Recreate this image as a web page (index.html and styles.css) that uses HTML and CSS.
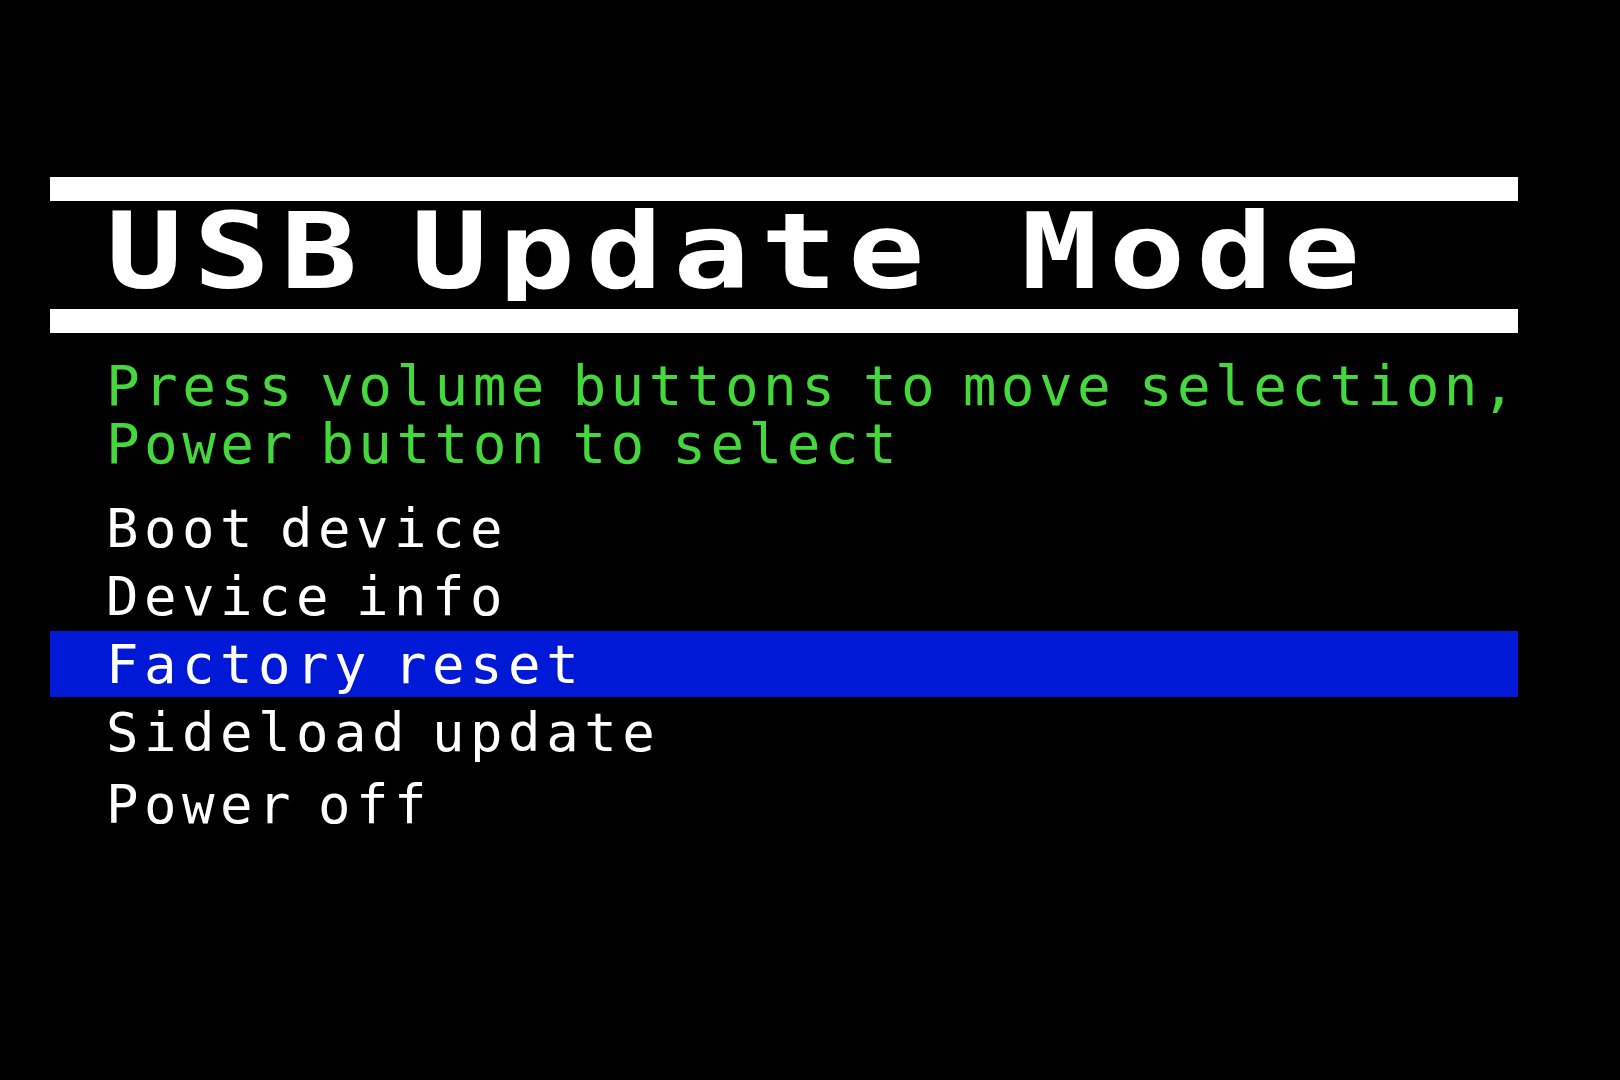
FILE: index.html
```html
<!DOCTYPE html>
<html>

<head>
    <title>USB Update Mode</title>
    <link rel="stylesheet" href="styles.css">
</head>

<body>

    <div class="screen">
        <!-- Header between the two white rules -->
        <div class="rule"></div>
        <div class="title"><span class="title-text">USB Update  Mode</span></div>
        <div class="rule"></div>

        <!-- Instructions -->
        <div class="hint">
            <p>Press volume buttons to move selection,</p>
            <p>Power button to select</p>
        </div>

        <!-- Boot menu -->
        <ul class="menu">
            <li class="item">Boot device</li>
            <li class="item">Device info</li>
            <li class="item selected">Factory reset</li>
            <li class="item">Sideload update</li>
            <li class="item last">Power off</li>
        </ul>
    </div>

</body>

</html>
```

FILE: styles.css
```css
/* Bootloader screen */
body {
    margin: 0;
    background-color: #000;
    color: #fff;
    font-family: "DejaVu Sans Mono", "Liberation Mono", monospace;
}

.screen {
    width: 1468px;
    margin-left: 50px;
    padding-top: 177px;
}

.rule {
    height: 24px;
    background-color: #fff;
}

.title {
    height: 108px;
    padding-left: 56px;
    box-sizing: border-box;
    padding-bottom: 6px;
    line-height: 102px;
    font-size: 106px;
    font-weight: bold;
    white-space: pre;
    /* keep the short descender clear of the lower rule */
    clip-path: inset(0 0 8px 0);
}

.title-text {
    display: inline-block;
    letter-spacing: 9px;
    word-spacing: -37px;
    transform: scaleX(1.2);
    transform-origin: left center;
}

.hint {
    margin-top: 24px;
    padding-left: 56px;
    color: #44d83c;
    font-size: 56px;
    line-height: 58px;
    letter-spacing: 4.4px;
    word-spacing: -14.5px;
    white-space: nowrap;
}

.hint p {
    margin: 0;
}

.menu {
    list-style: none;
    margin: 22px 0 0 0;
    padding: 0;
    font-size: 54px;
    letter-spacing: 5.5px;
    word-spacing: -16px;
}

.item {
    height: 66px;
    box-sizing: border-box;
    padding: 3px 0 1px 56px;
    margin-bottom: 2px;
    line-height: 62px;
}

.item.selected {
    background-color: #0019d6;
}

.item.last {
    margin-top: 6px;
}
```
